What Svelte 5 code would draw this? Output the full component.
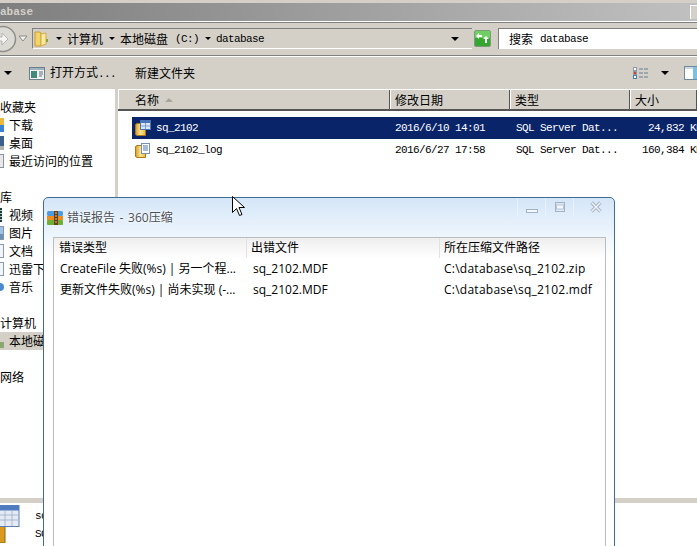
<script>
  const navGroups = [
    { title: '收藏夹', items: [
      { label: '下载', icon: 'download' },
      { label: '桌面', icon: 'desktop' },
      { label: '最近访问的位置', icon: 'recent' }
    ] },
    { title: '库', items: [
      { label: '视频', icon: 'video' },
      { label: '图片', icon: 'picture' },
      { label: '文档', icon: 'doc' },
      { label: '迅雷下载', icon: 'doc' },
      { label: '音乐', icon: 'music' }
    ] },
    { title: '计算机', items: [
      { label: '本地磁盘 (C:)', icon: 'disk', active: true }
    ] },
    { title: '网络', items: [] }
  ];

  const files = [
    { name: 'sq_2102', date: '2016/6/10 14:01', type: 'SQL Server Dat...', size: '24,832 KB', selected: true },
    { name: 'sq_2102_log', date: '2016/6/27 17:58', type: 'SQL Server Dat...', size: '160,384 KB', selected: false }
  ];

  const errors = [
    { message: 'CreateFile 失败(%s) | 另一个程...', file: 'sq_2102.MDF', path: 'C:\\database\\sq_2102.zip' },
    { message: '更新文件失败(%s) | 尚未实现 (-...', file: 'sq_2102.MDF', path: 'C:\\database\\sq_2102.mdf' }
  ];
</script>

<div class="screen">
  <div class="titlebar">
    <span class="title-text">abase</span>
    <span class="win-min"></span>
  </div>

  <div class="addressrow">
    <div class="back">
      <svg width="28" height="28" viewBox="0 0 28 28">
        <circle cx="7" cy="14" r="12.500" fill="#dcdad4" stroke="#8f8f8a" stroke-width="1.500" />
        <path d="M0 12h6V8l6 6-6 6v-4H0z" fill="#f4f4f2" stroke="#b4b4b0" />
      </svg>
      <svg class="back-drop" width="10" height="7" viewBox="0 0 10 7">
        <path d="M1 1h8L5 6z" fill="#f2f2f0" stroke="#8a8a86" />
      </svg>
    </div>
    <div class="address">
      <svg class="folder" width="14" height="16" viewBox="0 0 14 16">
        <path d="M1 1h5l1 2v12H1z" fill="#f3d46a" stroke="#c79a2e" />
        <path d="M7 3l5-1v11l-5 2z" fill="#fbe9a0" stroke="#d5ab45" />
        <rect x="12" y="8" width="2" height="3" fill="#8aa03c" />
      </svg>
      <span class="crumb">计算机</span>
      <span class="crumb">本地磁盘<span class="mono drive">(C:)</span></span>
      <span class="crumb"><span class="mono">database</span></span>
      <span class="drop address-drop"></span>
    </div>
    <div class="refresh">
      <svg width="17" height="17" viewBox="0 0 17 17">
        <rect x="0.500" y="0.500" width="16" height="16" rx="1.500" fill="#35a62f" stroke="#7f9b7c" />
        <rect x="1" y="1" width="15" height="7" fill="#6fcf62" />
        <path d="M2 6l3-3v2h3v2H5v2zM15 9l-3-3-3 3h2v4h2V9z" fill="#fff" />
      </svg>
    </div>
    <div class="search">搜索<span class="mono search-term">database</span></div>
  </div>

  <div class="toolbar">
    <span class="drop"></span>
    <svg class="open-icon" width="16" height="13" viewBox="0 0 16 13">
      <rect x="0.500" y="0.500" width="15" height="12" fill="#f1f1ee" stroke="#6d7f8c" />
      <rect x="1" y="1" width="14" height="2" fill="#9fb2c0" />
      <rect x="2" y="4" width="6" height="7" fill="#3f8a7a" />
      <path d="M10 5h4M10 7h4M10 9h3" stroke="#56707f" />
    </svg>
    <span class="tool">打开方式<span class="mono">...</span></span>
    <span class="tool new-folder">新建文件夹</span>
    <svg class="view-icon" width="15" height="13" viewBox="0 0 15 13">
      <rect x="0.500" y="0.500" width="3" height="3" fill="#fff" stroke="#8d99a6" />
      <rect x="0.500" y="4.500" width="3" height="3" fill="#d8402c" stroke="#8d99a6" />
      <rect x="0.500" y="8.500" width="3" height="3" fill="#fff" stroke="#4f7da6" />
      <path d="M6 2h9M6 6h9M6 10h9" stroke="#6b7f94" stroke-dasharray="4 1" />
    </svg>
    <span class="drop view-drop"></span>
    <svg class="pane-icon" width="14" height="14" viewBox="0 0 14 14">
      <rect x="0.500" y="0.500" width="20" height="13" fill="#fff" stroke="#6f8ba3" />
      <rect x="1" y="1" width="8" height="2" fill="#cfd8e0" />
      <rect x="9" y="1" width="5" height="12" fill="#7fbfe0" />
    </svg>
  </div>

  <div class="main">
    <nav class="sidebar">
      {#each navGroups as group}
        <div class="nav-title">{group.title}</div>
        {#each group.items as item}
          <div class="nav-item" class:active={item.active}>
            <span class="nav-icon {item.icon}"></span>
            <span class="nav-label">{item.label}</span>
          </div>
        {/each}
        <div class="nav-gap"></div>
      {/each}
    </nav>

    <div class="list">
      <div class="list-head">
        <div class="col-name">名称<span class="sort"></span></div>
        <div class="col-date">修改日期</div>
        <div class="col-type">类型</div>
        <div class="col-size">大小</div>
      </div>
      <div class="rows">
        {#each files as file}
          <div class="row" class:selected={file.selected}>
            <div class="cell-name">
              <svg width="16" height="17" viewBox="0 0 16 17">
                <defs>
                  <linearGradient id="binder-{file.name}" x1="0" x2="1" y1="0" y2="0">
                    <stop offset="0" stop-color="#d99a22" />
                    <stop offset="0.500" stop-color="#fbe38e" />
                    <stop offset="1" stop-color="#e9b93e" />
                  </linearGradient>
                </defs>
                <path d="M2 3.500h7l1.500 1v11H2l-1.500-1v-10z" fill="url(#binder-{file.name})" stroke="#a9781a" />
                {#if file.selected}
                  <rect x="5.500" y="0.500" width="10" height="9" fill="#dbe6f5" stroke="#4a76b8" />
                  <rect x="6" y="1" width="9" height="2" fill="#4a76b8" />
                  <path d="M6 6h9M10.500 3v6" stroke="#7e9ccc" />
                {:else}
                  <rect x="6.500" y="1.500" width="8" height="10" fill="#fff" stroke="#7d8fb0" />
                  <path d="M8 4h5M8 6h5M8 8h5" stroke="#4a76b8" />
                {/if}
              </svg>
              <span>{file.name}</span>
            </div>
            <div class="cell-date">{file.date}</div>
            <div class="cell-type">{file.type}</div>
            <div class="cell-size">{file.size}</div>
          </div>
        {/each}
      </div>
    </div>
  </div>

  <div class="details">
    <svg width="20" height="38" viewBox="0 0 20 38">
      <rect x="-8" y="18" width="13" height="20" fill="#d99a1e" stroke="#8a6414" />
      <rect x="-2" y="0.500" width="21" height="21" fill="#e4ebf5" stroke="#5b7fb4" />
      <rect x="-2" y="0.500" width="21" height="5" fill="#4f7cc0" />
      <path d="M5 5v16M12 5v16M-2 10h21M-2 15h21" stroke="#a9b7cc" />
    </svg>
    <div class="details-text">
      <span>sq_2102</span>
      <span>SQL Server</span>
    </div>
  </div>

  <section class="dialog">
    <header class="dialog-head">
      <svg width="16" height="14" viewBox="0 0 16 14">
        <rect x="0" y="0" width="16" height="5" rx="1.500" fill="#4d9be0" />
        <rect x="0" y="5" width="16" height="4" fill="#ef8a1d" />
        <rect x="0" y="9" width="16" height="5" rx="1" fill="#6fb034" />
        <rect x="7" y="0" width="4" height="14" fill="#6b3f1a" />
        <path d="M8 2h2M8 5h2M8 8h2M8 11h2" stroke="#e5c27a" />
      </svg>
      <span class="dialog-title">错误报告 - 360压缩</span>
      <div class="winbtns">
        <span class="winbtn">
          <svg width="12" height="12" viewBox="0 0 12 12"><rect x="0.500" y="8.500" width="11" height="3" fill="#f4f8fd" stroke="#a5b2c2" /></svg>
        </span>
        <span class="winbtn">
          <svg width="12" height="12" viewBox="0 0 12 12"><rect x="1.500" y="1.500" width="9" height="9" fill="none" stroke="#a5b2c2" /><rect x="2.500" y="4" width="7" height="4" fill="#f4f8fd" stroke="#b8c4d2" /></svg>
        </span>
        <span class="winbtn close">
          <svg width="14" height="14" viewBox="0 0 14 14"><path d="M2.500 2.500l9 9M11.500 2.500l-9 9" stroke="#a9b5c4" stroke-width="3.400" /><path d="M2.500 2.500l9 9M11.500 2.500l-9 9" stroke="#eef3f9" stroke-width="1.400" /></svg>
        </span>
      </div>
    </header>
    <div class="error-list">
      <div class="error-head">
        <div>错误类型</div>
        <div>出错文件</div>
        <div>所在压缩文件路径</div>
      </div>
      {#each errors as err}
        <div class="error-row">
          <div>{err.message}</div>
          <div>{err.file}</div>
          <div>{err.path}</div>
        </div>
      {/each}
    </div>
  </section>

  <svg class="cursor" width="13" height="21" viewBox="0 0 13 21">
    <path d="M0.500 0.500v16l4-4 3 7 2.500-1-3-7h5.500z" fill="#fff" stroke="#000" />
  </svg>
</div>

<style>
  :global(body) {
    margin: 0;
  }

  .screen {
    position: relative;
    width: 697px;
    height: 546px;
    overflow: hidden;
    display: flex;
    flex-direction: column;
    background: #fff;
    color: #000;
    font-family: "Noto Sans CJK SC", sans-serif;
    font-size: 12px;
    line-height: 18px;
  }

  .mono {
    font-family: "Liberation Mono", monospace;
    font-size: 11px;
    letter-spacing: -0.6px;
  }

  .drive {
    margin-left: 7px;
  }

  .search-term {
    margin-left: 7px;
  }

  .titlebar {
    height: 18px;
    margin-top: 3px;
    display: flex;
    align-items: center;
    justify-content: space-between;
    background: linear-gradient(to right, #7f7f7f, #c0c0c0);
    box-shadow: 0 -3px 0 #d4d0c8;
    flex: none;
  }

  .title-text {
    font-family: "Liberation Mono", monospace;
    font-size: 11px;
    font-weight: bold;
    color: #d4d0c8;
  }

  .win-min {
    width: 6px;
    height: 13px;
    background: #d4d0c8;
    border-top: 1px solid #fff;
    border-left: 1px solid #fff;
  }

  .addressrow {
    height: 33px;
    flex: none;
    display: flex;
    align-items: center;
    background: #d4d0c8;
    border-top: 1px solid #fff;
    border-bottom: 1px solid #808080;
    box-shadow: inset 0 1px 0 #808080;
    box-sizing: content-box;
  }

  .back {
    width: 32px;
    flex: none;
    height: 28px;
    position: relative;
    margin-left: -4px;
    margin-right: 4px;
    display: flex;
    align-items: center;
  }

  .back svg {
    flex: none;
  }

  .back-drop {
    margin-left: -6px;
  }

  .address {
    width: 440px;
    height: 21px;
    flex: none;
    box-sizing: border-box;
    border-top: 1px solid #808080;
    border-left: 1px solid #808080;
    border-bottom: 1px solid #fff;
    display: flex;
    align-items: center;
    position: relative;
    padding-left: 1px;
  }

  .folder {
    flex: none;
    margin-right: 8px;
  }

  .crumb {
    display: flex;
    align-items: center;
    white-space: pre;
    margin-right: 6px;
  }

  .crumb::before {
    content: "";
    border-left: 3px solid transparent;
    border-right: 3px solid transparent;
    border-top: 3px solid #000;
    margin-right: 5px;
  }

  .drop {
    flex: none;
    width: 0;
    height: 0;
    border-left: 4px solid transparent;
    border-right: 4px solid transparent;
    border-top: 4px solid #000;
  }

  .address-drop {
    position: absolute;
    right: 13px;
    top: 8px;
  }

  .refresh {
    width: 17px;
    height: 17px;
    flex: none;
    padding: 0 2px;
    display: flex;
  }

  .search {
    width: 200px;
    height: 21px;
    flex: none;
    margin-left: 5px;
    box-sizing: border-box;
    padding-left: 10px;
    background: #fff;
    border-left: 1px solid #808080;
    border-top: 1px solid #808080;
    display: flex;
    align-items: center;
    white-space: pre;
  }

  .toolbar {
    height: 33px;
    flex: none;
    display: flex;
    align-items: center;
    background: #d4d0c8;
    border-top: 1px solid #fff;
    box-sizing: border-box;
    padding-left: 4px;
  }

  .open-icon {
    margin-left: 17px;
    flex: none;
  }

  .tool {
    margin-left: 5px;
    white-space: nowrap;
  }

  .new-folder {
    margin-left: 19px;
  }

  .view-icon {
    margin-left: auto;
    flex: none;
  }

  .view-drop {
    margin-left: 13px;
    margin-right: 15px;
  }

  .pane-icon {
    flex: none;
    margin-right: -1px;
  }

  .main {
    flex: 1;
    min-height: 0;
    display: flex;
  }

  .sidebar {
    width: 115px;
    flex: none;
    padding-top: 9px;
    overflow: hidden;
    white-space: nowrap;
  }

  .nav-title {
    height: 18px;
  }

  .nav-gap {
    height: 18px;
  }

  .nav-item {
    height: 18px;
    display: flex;
    align-items: center;
  }

  .nav-item.active {
    background: #d4d0c8;
  }

  .nav-icon {
    width: 4px;
    height: 14px;
    margin-right: 5px;
    flex: none;
    box-sizing: border-box;
  }

  .download {
    background: linear-gradient(#e9b93c 50%, #3a82d8 50%);
  }

  .desktop {
    background: linear-gradient(#3c5f8e 70%, #b0b0b0 70%);
  }

  .recent {
    background: #e8e8e8;
    border: 1px solid #8a94a0;
    border-left: 0;
  }

  .video {
    width: 2px;
    margin-right: 7px;
    background: repeating-linear-gradient(#1c3c36 0 2px, #a8c4bc 2px 3px);
  }

  .picture {
    background: linear-gradient(#9cc4ea 60%, #6a90b8 60%);
    border: 1px solid #8a94a0;
    border-left: 0;
  }

  .doc {
    background: #f2f5f9;
    border: 1px solid #8a9ab0;
    border-left: 0;
  }

  .music {
    background: #4a8ad0;
    height: 8px;
    border-radius: 0 4px 4px 0;
  }

  .disk {
    height: 6px;
    margin-top: 8px;
    background: linear-gradient(to right, #7fb050, #9a9a9a);
  }

  .list {
    flex: 1;
    min-width: 0;
    border-left: 3px solid #d4d0c8;
  }

  .list-head {
    height: 19px;
    display: grid;
    grid-template-columns: 272px 120px 120px 1fr;
    background: #d4d0c8;
    border-top: 1px solid #fff;
    border-bottom: 2px solid #555;
    box-sizing: content-box;
  }

  .list-head > div {
    display: flex;
    align-items: center;
    padding-left: 5px;
    border-right: 1px solid #555;
    box-shadow: inset 1px 0 0 #fff;
  }

  .list-head > .col-name {
    padding-left: 17px;
  }

  .sort {
    margin-left: 6px;
    border-left: 4px solid transparent;
    border-right: 4px solid transparent;
    border-bottom: 4px solid #a8a59e;
  }

  .rows {
    padding-top: 6px;
  }

  .row {
    height: 22px;
    margin-left: 14px;
    display: grid;
    grid-template-columns: 258px 120px 120px 72px;
    align-items: center;
    font-family: "Liberation Mono", monospace;
    font-size: 11px;
    letter-spacing: -0.6px;
    white-space: nowrap;
  }

  .row.selected {
    background: #0a246a;
    color: #fff;
  }

  .cell-name {
    display: flex;
    align-items: center;
    padding-left: 3px;
    gap: 5px;
  }

  .cell-date {
    padding-left: 5px;
  }

  .cell-type {
    padding-left: 6px;
  }

  .cell-size {
    text-align: right;
  }

  .details {
    height: 44px;
    flex: none;
    border-top: 5px solid #d4d0c8;
    display: flex;
    align-items: flex-start;
    box-sizing: content-box;
    padding-top: 2px;
    margin-bottom: -3px;
    overflow: hidden;
  }

  .details svg {
    flex: none;
  }

  .details-text {
    margin-left: 15px;
    margin-top: 2px;
    display: flex;
    flex-direction: column;
    font-family: "Liberation Mono", monospace;
    font-size: 11px;
    letter-spacing: -0.6px;
    white-space: nowrap;
  }

  .dialog {
    position: absolute;
    left: 43px;
    top: 197px;
    width: 572px;
    height: 380px;
    box-sizing: border-box;
    border: 1px solid #3f6d96;
    border-radius: 5px 5px 0 0;
    padding: 0 9px;
    background: linear-gradient(#d5e6f8 0, #eff6fd 40px, #fff 60px);
    font-family: "Open Sans", "Noto Sans CJK SC", sans-serif;
  }

  .dialog-head {
    height: 39px;
    display: flex;
    align-items: center;
    gap: 4px;
    margin-left: -6px;
    margin-right: -9px;
    position: relative;
  }

  .dialog-title {
    color: #4a5058;
    text-shadow: 0 0 3px #fff, 0 0 3px #fff;
    word-spacing: 1.500px;
  }

  .winbtns {
    position: absolute;
    right: 0;
    top: 0;
    display: flex;
  }

  .winbtn {
    width: 28px;
    height: 18px;
    border-left: 1px solid #eaf2fb;
    display: flex;
    align-items: center;
    justify-content: center;
    box-sizing: border-box;
  }

  .winbtn.close {
    width: 41px;
    padding-left: 4px;
  }

  .error-list {
    height: 400px;
    border: 1px solid #bdbdbd;
    border-bottom: 0;
    background: #fff;
    box-sizing: border-box;
    width: 553px;
  }

  .error-head,
  .error-row {
    display: grid;
    grid-template-columns: 192px 193px 1fr;
    white-space: nowrap;
  }

  .error-head {
    height: 20px;
    align-items: center;
    background: linear-gradient(#eeeeee, #fff);
  }

  .error-head > div {
    padding-left: 5px;
  }

  .error-head > div + div {
    padding-left: 4px;
    border-left: 1px solid #e2e2e2;
    height: 100%;
    display: flex;
    align-items: center;
  }

  .error-row {
    height: 21px;
    align-items: center;
  }

  .error-row > div {
    padding-left: 6px;
  }

  .error-row > div:nth-child(2) {
    padding-left: 7px;
  }

  .error-row > div:nth-child(3) {
    padding-left: 5px;
    letter-spacing: 0.25px;
  }

  .cursor {
    position: absolute;
    left: 232px;
    top: 196px;
  }
</style>
